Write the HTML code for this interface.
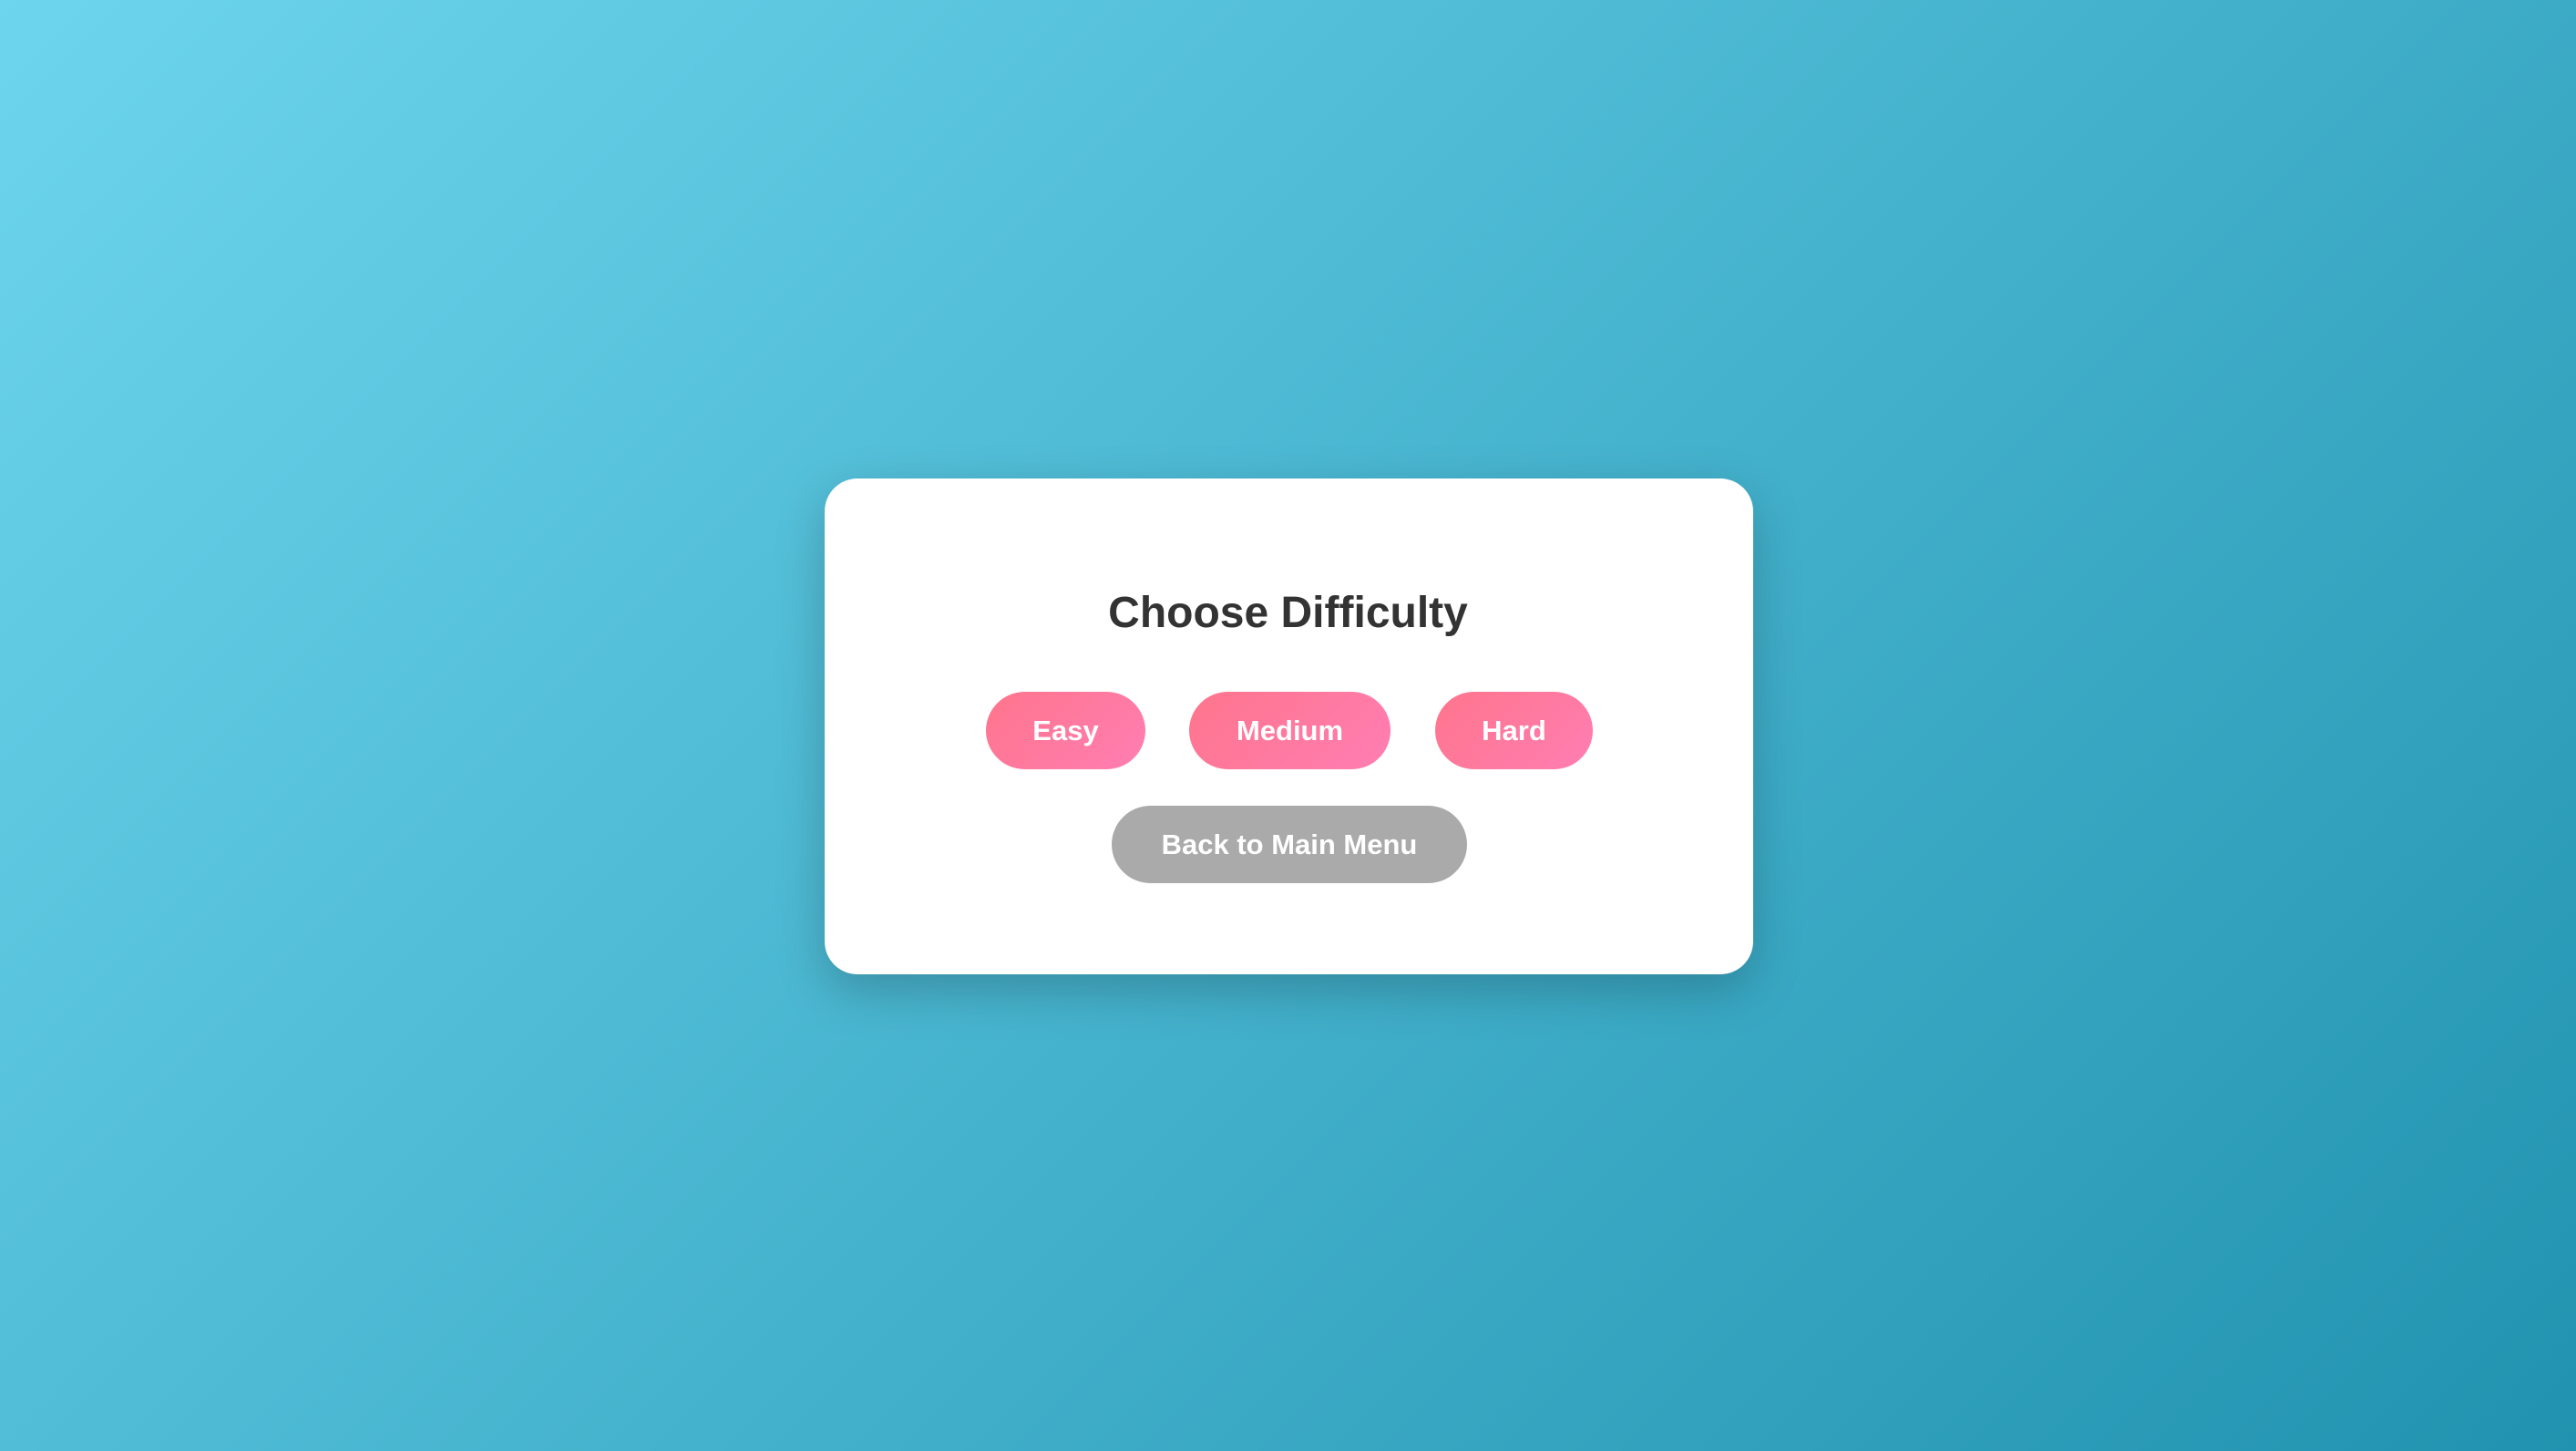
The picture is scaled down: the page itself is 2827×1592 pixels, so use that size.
<!DOCTYPE html>
<html><head><meta charset="utf-8"><style>
html,body{margin:0;padding:0;width:2827px;height:1592px;overflow:hidden}
body{background:linear-gradient(135deg,#6dd5ed 0%,#2193b0 100%);font-family:"Liberation Sans",Arial,sans-serif;position:relative}
.card{position:absolute;left:905px;top:525px;width:1019px;height:544px;background:#fff;border-radius:36px;box-shadow:0 18px 54px rgba(0,0,0,0.22)}
h1{position:absolute;left:0;right:0;top:641px;margin:0;text-align:center;font-size:48px;font-weight:bold;color:#333;line-height:64px}
.btn{position:absolute;top:759px;height:85px;border-radius:43px;background:linear-gradient(135deg,#ff758c,#ff7eb3);color:#fff;font-weight:bold;font-size:31px;display:flex;align-items:center;justify-content:center}
.back{top:884px;left:1220px;width:390px;background:#aaa}
</style></head><body>
<div class="card"></div>
<h1>Choose Difficulty</h1>
<div class="btn" style="left:1082px;width:175px">Easy</div>
<div class="btn" style="left:1305px;width:221px">Medium</div>
<div class="btn" style="left:1575px;width:173px">Hard</div>
<div class="btn back">Back to Main Menu</div>
</body></html>
